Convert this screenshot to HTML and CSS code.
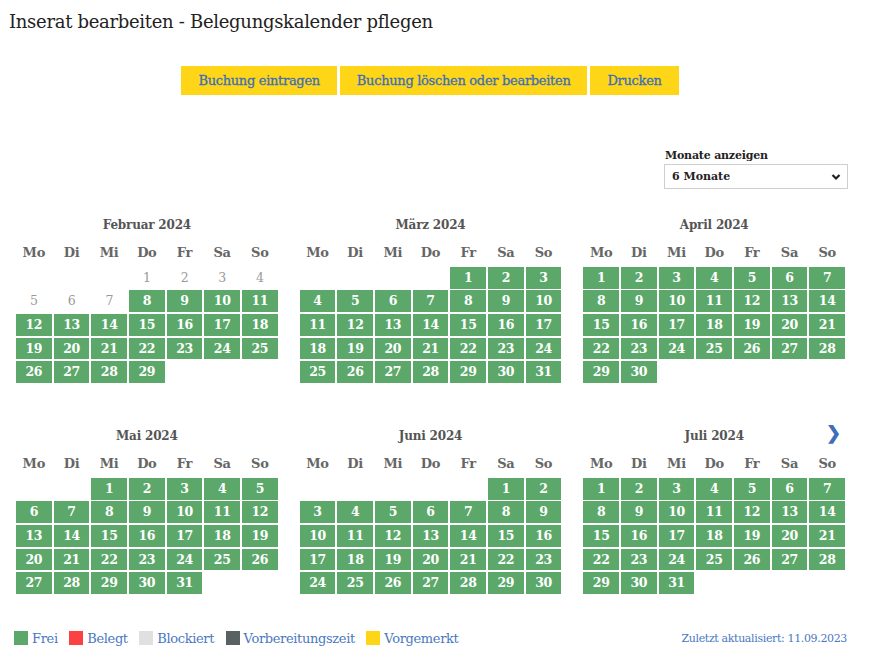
FILE: index.html
```html
<!DOCTYPE html>
<html lang="de">
<head>
<meta charset="utf-8">
<link rel="stylesheet" href="styles.css">
</head>
<body>
<div class="page">
  <h1 class="title">Inserat bearbeiten - Belegungskalender pflegen</h1>
  <div class="actions">
    <a class="btn">Buchung eintragen</a>
    <a class="btn">Buchung löschen oder bearbeiten</a>
    <a class="btn">Drucken</a>
  </div>
  <div class="filter">
    <label class="filter-label">Monate anzeigen</label>
    <div class="select"><span>6 Monate</span>
      <svg width="10" height="8" viewBox="0 0 10 8"><path d="M1.5 2 L5 5.5 L8.5 2" fill="none" stroke="#222" stroke-width="2.2"/></svg>
    </div>
  </div>
  <div class="months" id="months"></div>
  <div class="footer">
    <div class="legend">
      <span class="leg"><i class="sw free"></i>Frei</span>
      <span class="leg"><i class="sw booked"></i>Belegt</span>
      <span class="leg"><i class="sw blocked"></i>Blockiert</span>
      <span class="leg"><i class="sw prep"></i>Vorbereitungszeit</span>
      <span class="leg"><i class="sw marked"></i>Vorgemerkt</span>
    </div>
    <div class="updated">Zuletzt aktualisiert: 11.09.2023</div>
  </div>
</div>
<script>
var data = [
  ["Februar 2024", 3, 29, 7],
  ["März 2024", 4, 31, 0],
  ["April 2024", 0, 30, 0],
  ["Mai 2024", 2, 31, 0],
  ["Juni 2024", 5, 30, 0],
  ["Juli 2024", 0, 31, 0]
];
var days = ["Mo","Di","Mi","Do","Fr","Sa","So"];
var root = document.getElementById("months");
data.forEach(function (m, idx) {
  var sec = document.createElement("div");
  sec.className = "month";
  var h = '<div class="month-title">' + m[0] + '</div>';
  if (idx === 5) h += '<span class="next">&#10095;</span>';
  h += '<div class="grid">';
  days.forEach(function (d) { h += '<div class="wd">' + d + '</div>'; });
  for (var i = 0; i < m[1]; i++) h += '<div class="empty"></div>';
  for (var d = 1; d <= m[2]; d++) {
    h += '<div class="day ' + (d <= m[3] ? 'past' : 'free') + '">' + d + '</div>';
  }
  h += '</div>';
  sec.innerHTML = h;
  root.appendChild(sec);
});
</script>
</body>
</html>
```
FILE: styles.css
```css
* { box-sizing: border-box; }
body {
  margin: 0;
  font-family: "DejaVu Serif", serif;
  color: #333;
  background: #fff;
}
.page {
  padding: 0 25px 0 9px;
}
.title {
  margin: 0;
  padding-top: 11px;
  font-size: 18px;
  font-weight: normal;
  line-height: 22px;
  color: #222;
  letter-spacing: -0.3px;
}
.actions {
  display: flex;
  justify-content: center;
  gap: 3px;
  margin-top: 33px;
  padding-left: 4px;
}
.btn {
  background: #ffd617;
  color: #3d6fb8;
  font-size: 13px;
  line-height: 29px;
  height: 29px;
  padding: 0 17px;
  font-weight: normal;
  letter-spacing: -0.3px;
  -webkit-text-stroke: 0.3px #3d6fb8;
}
.filter {
  display: flex;
  flex-direction: column;
  align-items: flex-start;
  margin-left: auto;
  width: 184px;
  margin-top: 54px;
  margin-right: -1px;
}
.filter-label {
  font-size: 11px;
  font-weight: bold;
  color: #222;
  line-height: 14px;
  margin-left: 1px;
  letter-spacing: -0.2px;
}
.select {
  margin-top: 1px;
  width: 184px;
  height: 25px;
  border: 1px solid #cfcfcf;
  display: flex;
  align-items: center;
  justify-content: space-between;
  padding: 0 6px 0 7px;
  font-size: 11px;
  font-weight: bold;
  color: #222;
}
.months {
  display: grid;
  grid-template-columns: repeat(3, 1fr);
  column-gap: 22px;
  row-gap: 43px;
  margin-top: 26px;
  padding-left: 7px;
  margin-right: 2px;
}
.month {
  position: relative;
}
.month-title {
  text-align: center;
  font-size: 12px;
  font-weight: bold;
  color: #555;
  line-height: 20px;
  letter-spacing: -0.2px;
}
.next {
  position: absolute;
  right: 4px;
  top: -4px;
  color: #3d6fb8;
  font-size: 18px;
  font-weight: bold;
}
.grid {
  display: grid;
  grid-template-columns: repeat(7, 1fr);
  column-gap: 2px;
  row-gap: 1.8px;
  margin-top: 8px;
}
.wd {
  text-align: center;
  font-size: 13px;
  font-weight: bold;
  color: #666;
  line-height: 20px;
  margin-bottom: 2px;
  letter-spacing: -0.3px;
}
.day {
  height: 21.8px;
  line-height: 22px;
  text-align: center;
  font-size: 12.5px;
  font-weight: bold;
  letter-spacing: -0.4px;
}
.day.free {
  background: #5ba86a;
  color: #fff;
}
.day.past {
  color: #999;
  font-weight: normal;
}
.footer {
  display: flex;
  align-items: center;
  justify-content: space-between;
  margin-top: 37px;
  padding-left: 5px;
  margin-right: 0;
}
.legend {
  display: flex;
  align-items: center;
  gap: 11.5px;
}
.leg {
  display: flex;
  align-items: center;
  gap: 4px;
  font-size: 13px;
  color: #4a78c0;
  letter-spacing: -0.35px;
}
.sw {
  display: block;
  width: 14px;
  height: 14px;
}
.sw.free { background: #5ba86a; }
.sw.booked { background: #fb4141; }
.sw.blocked { background: #e0e0e0; }
.sw.prep { background: #5a6163; }
.sw.marked { background: #ffd617; }
.updated {
  font-size: 11px;
  color: #4a78c0;
  letter-spacing: -0.35px;
}
```
